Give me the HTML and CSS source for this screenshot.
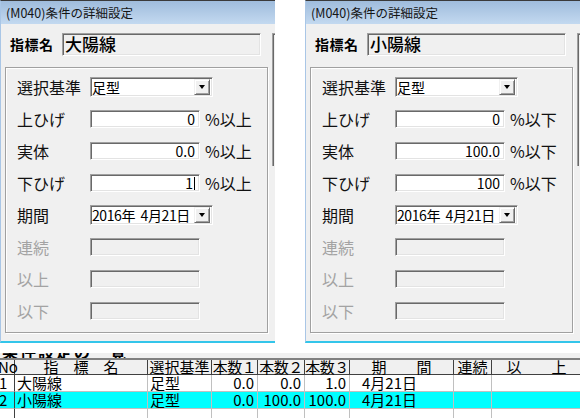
FILE: index.html
```html
<!DOCTYPE html>
<html lang="ja">
<head>
<meta charset="utf-8">
<link rel="stylesheet" href="styles.css">
</head>
<body>
<div class="page">
  <div class="dialogs">
    <div class="dlg">
      <div class="title">(M040)条件の詳細設定</div>
      <div class="dbody">
        <div class="main">
          <div class="namerow"><span class="nlabel">指標名</span><div class="nbox">大陽線</div></div>
          <div class="group">
            <div class="row"><span class="lab">選択基準</span><div class="combo"><span class="ctext">足型</span><span class="dd"><span class="tri"></span></span></div></div>
            <div class="row"><span class="lab">上ひげ</span><div class="edit">0</div><span class="unit">%以上</span></div>
            <div class="row"><span class="lab">実体</span><div class="edit">0.0</div><span class="unit">%以上</span></div>
            <div class="row"><span class="lab">下ひげ</span><div class="edit">1<span class="caret"></span></div><span class="unit">%以上</span></div>
            <div class="row"><span class="lab">期間</span><div class="combo"><span class="ctext date">2016年&nbsp;&nbsp;4月21日</span><span class="dd"><span class="tri"></span></span></div></div>
            <div class="row"><span class="lab off">連続</span><div class="edit dis"></div></div>
            <div class="row"><span class="lab off">以上</span><div class="edit dis"></div></div>
            <div class="row"><span class="lab off">以下</span><div class="edit dis"></div></div>
          </div>
        </div>
        <div class="side"></div>
      </div>
    </div>
    <div class="dlg">
      <div class="title">(M040)条件の詳細設定</div>
      <div class="dbody">
        <div class="main">
          <div class="namerow"><span class="nlabel">指標名</span><div class="nbox">小陽線</div></div>
          <div class="group">
            <div class="row"><span class="lab">選択基準</span><div class="combo"><span class="ctext">足型</span><span class="dd"><span class="tri"></span></span></div></div>
            <div class="row"><span class="lab">上ひげ</span><div class="edit">0</div><span class="unit">%以下</span></div>
            <div class="row"><span class="lab">実体</span><div class="edit">100.0</div><span class="unit">%以下</span></div>
            <div class="row"><span class="lab">下ひげ</span><div class="edit">100</div><span class="unit">%以下</span></div>
            <div class="row"><span class="lab">期間</span><div class="combo"><span class="ctext date">2016年&nbsp;&nbsp;4月21日</span><span class="dd"><span class="tri"></span></span></div></div>
            <div class="row"><span class="lab off">連続</span><div class="edit dis"></div></div>
            <div class="row"><span class="lab off">以上</span><div class="edit dis"></div></div>
            <div class="row"><span class="lab off">以下</span><div class="edit dis"></div></div>
          </div>
        </div>
        <div class="side"></div>
      </div>
    </div>
  </div>
  <div class="strip"><span class="striptext">条件設定の一覧</span></div>
  <div class="grid">
    <div class="gr head">
      <div class="c no">No</div>
      <div class="c">指　標　名</div>
      <div class="c">選択基準</div>
      <div class="c n">本数１</div>
      <div class="c n">本数２</div>
      <div class="c n">本数３</div>
      <div class="c">期　　間</div>
      <div class="c">連続</div>
      <div class="c">以　　上</div>
    </div>
    <div class="gr">
      <div class="c no">1</div>
      <div class="c l">大陽線</div>
      <div class="c l">足型</div>
      <div class="c r">0.0</div>
      <div class="c r">0.0</div>
      <div class="c r">1.0</div>
      <div class="c d">4月21日</div>
      <div class="c"></div>
      <div class="c"></div>
    </div>
    <div class="gr sel">
      <div class="c no">2</div>
      <div class="c l">小陽線</div>
      <div class="c l">足型</div>
      <div class="c r">0.0</div>
      <div class="c r">100.0</div>
      <div class="c r">100.0</div>
      <div class="c d">4月21日</div>
      <div class="c"></div>
      <div class="c"></div>
    </div>
    <div class="gr">
      <div class="c no"></div>
      <div class="c"></div>
      <div class="c"></div>
      <div class="c"></div>
      <div class="c"></div>
      <div class="c"></div>
      <div class="c"></div>
      <div class="c"></div>
      <div class="c"></div>
    </div>
  </div>
</div>
</body>
</html>
```
FILE: styles.css
```css
html, body {
  margin: 0;
  padding: 0;
  background: #fff;
}
body {
  width: 580px;
  height: 418px;
  overflow: hidden;
  font-family: "Noto Sans CJK JP", sans-serif;
  color: #000;
}
.page {
  width: 580px;
  height: 418px;
  overflow: hidden;
}
.dialogs {
  display: flex;
  gap: 30px;
  height: 343px;
}
.dlg {
  width: 275px;
  height: 343px;
  flex: none;
  box-sizing: border-box;
  border-top: 1px solid #3a3a3a;
  border-left: 1px solid #a9c6e6;
  border-bottom: 2px solid #33c5ea;
  background: #f0f0f0;
  overflow: hidden;
}
.title {
  height: 23px;
  background: linear-gradient(#9fbcdc, #c3d9f0);
  font-size: 12.5px;
  line-height: 23px;
  padding-left: 5px;
  color: #151515;
  white-space: nowrap;
}
.dbody {
  display: flex;
  align-items: flex-start;
  padding: 9px 0 0 4px;
}
.main {
  width: 263px;
  flex: none;
}
.namerow {
  display: flex;
  align-items: center;
  height: 23px;
}
.nlabel {
  width: 52px;
  padding-left: 5px;
  font-weight: bold;
  font-size: 14px;
  letter-spacing: 0.5px;
  line-height: 23px;
}
.nbox {
  width: 199px;
  height: 23px;
  box-sizing: border-box;
  border: 1px solid;
  border-color: #a0a0a0 #ffffff #ffffff #a0a0a0;
  box-shadow: inset 1px 1px 0 #696969, inset -1px -1px 0 #e3e3e3;
  background: #f0f0f0;
  font-size: 17px;
  font-weight: 500;
  line-height: 20px;
  padding-left: 2px;
}
.group {
  margin-top: 11px;
  height: 266px;
  box-sizing: border-box;
  border: 1px solid #a0a0a0;
  box-shadow: 1px 1px 0 #fff, inset 1px 1px 0 #fff;
  padding: 3px 0 5px 11px;
}
.row {
  display: flex;
  align-items: center;
  height: 32px;
}
.lab {
  width: 73px;
  flex: none;
  font-size: 16px;
  line-height: 20px;
  white-space: nowrap;
  color: #111;
}
.lab.off {
  color: #a3a3a3;
}
.edit {
  width: 110px;
  height: 18px;
  flex: none;
  box-sizing: border-box;
  border: 1px solid;
  border-color: #a0a0a0 #ffffff #ffffff #a0a0a0;
  box-shadow: inset 1px 1px 0 #696969, inset -1px -1px 0 #e3e3e3;
  background: #fff;
  font-size: 14px;
  line-height: 16px;
  padding-right: 4px;
  display: flex;
  justify-content: flex-end;
  align-items: center;
}
.edit.dis {
  background: #f0f0f0;
}
.caret {
  display: inline-block;
  width: 1px;
  height: 13px;
  background: #000;
  margin-left: 1px;
}
.unit {
  margin-left: 5px;
  font-size: 16px;
  line-height: 20px;
  white-space: nowrap;
  color: #111;
}
.combo {
  width: 123px;
  height: 20px;
  flex: none;
  box-sizing: border-box;
  border: 1px solid;
  border-color: #a0a0a0 #ffffff #ffffff #a0a0a0;
  box-shadow: inset 1px 1px 0 #696969, inset -1px -1px 0 #e3e3e3;
  background: #fff;
  display: flex;
  align-items: center;
  justify-content: space-between;
  padding: 0 2px 0 1px;
}
.ctext {
  font-size: 14px;
  line-height: 16px;
  white-space: nowrap;
}
.ctext.date {
  letter-spacing: -0.4px;
}
.dd {
  width: 16px;
  height: 16px;
  flex: none;
  box-sizing: border-box;
  background: #f0f0f0;
  border: 1px solid;
  border-color: #f0f0f0 #696969 #696969 #f0f0f0;
  box-shadow: inset 1px 1px 0 #fff, inset -1px -1px 0 #a0a0a0;
  display: flex;
  align-items: center;
  justify-content: center;
}
.tri {
  width: 0;
  height: 0;
  border-left: 3.5px solid transparent;
  border-right: 3.5px solid transparent;
  border-top: 4px solid #000;
}
.side {
  margin-left: 4px;
  width: 20px;
  height: 133px;
  flex: none;
  box-sizing: border-box;
  border-top: 1px solid #a0a0a0;
  border-left: 1px solid #a0a0a0;
  box-shadow: inset 1px 1px 0 #696969;
}
.strip {
  margin-top: 10px;
  height: 5px;
  background: #f0f0f0;
  overflow: hidden;
}
.striptext {
  display: block;
  font-size: 16px;
  font-weight: bold;
  line-height: 14px;
  margin-top: -9px;
  padding-left: 2px;
  letter-spacing: 2px;
  white-space: nowrap;
}
.grid {
  margin-left: -4px;
  border-top: 2px solid #808080;
  font-size: 15px;
}
.gr {
  display: grid;
  grid-template-columns: 19px 133px 64px 46px 47px 45px 104px 38px 90px;
  height: 17px;
  background: #fff;
}
.gr.head {
  height: 15px;
  background: #f0f0f0;
}
.gr.sel {
  background: #00ffff;
}
.c {
  box-sizing: border-box;
  border-right: 1px solid #c0c0c0;
  border-bottom: 1px solid #c0c0c0;
  line-height: 16px;
  white-space: nowrap;
}
.head .c {
  border-right-color: #404040;
  border-bottom-color: #404040;
  text-align: center;
  line-height: 14px;
}
.head .c.n {
  letter-spacing: -0.5px;
}
.c.no {
  border-right-color: #404040;
  padding-left: 3px;
  text-align: left;
}
.head .c.no {
  padding-left: 2px;
  text-align: left;
}
.c.l {
  padding-left: 2px;
}
.c.r {
  text-align: right;
  padding-right: 3px;
}
.c.d {
  padding-left: 12px;
}
```
